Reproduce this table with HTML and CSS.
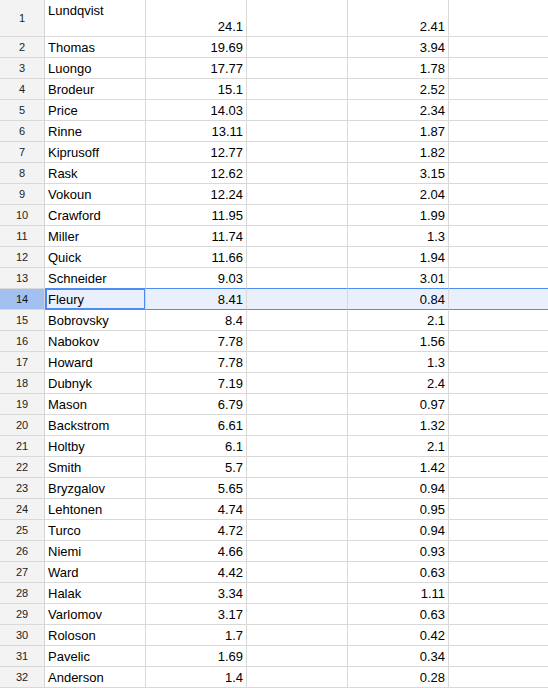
FILE: index.html
```html
<!DOCTYPE html>
<html>
<head>
<meta charset="utf-8">
<link rel="stylesheet" href="styles.css">
</head>
<body>
<table class="sheet">
<colgroup><col class="c-h"><col class="c-a"><col class="c-b"><col class="c-c"><col class="c-d"><col class="c-e"></colgroup>
<tbody>
<tr class="r-tall"><th>1</th><td class="name top">Lundqvist</td><td class="num">24.1</td><td></td><td class="num">2.41</td><td></td></tr>
<tr><th>2</th><td class="name">Thomas</td><td class="num">19.69</td><td></td><td class="num">3.94</td><td></td></tr>
<tr><th>3</th><td class="name">Luongo</td><td class="num">17.77</td><td></td><td class="num">1.78</td><td></td></tr>
<tr><th>4</th><td class="name">Brodeur</td><td class="num">15.1</td><td></td><td class="num">2.52</td><td></td></tr>
<tr><th>5</th><td class="name">Price</td><td class="num">14.03</td><td></td><td class="num">2.34</td><td></td></tr>
<tr><th>6</th><td class="name">Rinne</td><td class="num">13.11</td><td></td><td class="num">1.87</td><td></td></tr>
<tr><th>7</th><td class="name">Kiprusoff</td><td class="num">12.77</td><td></td><td class="num">1.82</td><td></td></tr>
<tr><th>8</th><td class="name">Rask</td><td class="num">12.62</td><td></td><td class="num">3.15</td><td></td></tr>
<tr><th>9</th><td class="name">Vokoun</td><td class="num">12.24</td><td></td><td class="num">2.04</td><td></td></tr>
<tr><th>10</th><td class="name">Crawford</td><td class="num">11.95</td><td></td><td class="num">1.99</td><td></td></tr>
<tr><th>11</th><td class="name">Miller</td><td class="num">11.74</td><td></td><td class="num">1.3</td><td></td></tr>
<tr><th>12</th><td class="name">Quick</td><td class="num">11.66</td><td></td><td class="num">1.94</td><td></td></tr>
<tr class="before-sel"><th>13</th><td class="name">Schneider</td><td class="num">9.03</td><td></td><td class="num">3.01</td><td></td></tr>
<tr class="sel"><th>14</th><td class="name active">Fleury</td><td class="num">8.41</td><td></td><td class="num">0.84</td><td></td></tr>
<tr><th>15</th><td class="name">Bobrovsky</td><td class="num">8.4</td><td></td><td class="num">2.1</td><td></td></tr>
<tr><th>16</th><td class="name">Nabokov</td><td class="num">7.78</td><td></td><td class="num">1.56</td><td></td></tr>
<tr><th>17</th><td class="name">Howard</td><td class="num">7.78</td><td></td><td class="num">1.3</td><td></td></tr>
<tr><th>18</th><td class="name">Dubnyk</td><td class="num">7.19</td><td></td><td class="num">2.4</td><td></td></tr>
<tr><th>19</th><td class="name">Mason</td><td class="num">6.79</td><td></td><td class="num">0.97</td><td></td></tr>
<tr><th>20</th><td class="name">Backstrom</td><td class="num">6.61</td><td></td><td class="num">1.32</td><td></td></tr>
<tr><th>21</th><td class="name">Holtby</td><td class="num">6.1</td><td></td><td class="num">2.1</td><td></td></tr>
<tr><th>22</th><td class="name">Smith</td><td class="num">5.7</td><td></td><td class="num">1.42</td><td></td></tr>
<tr><th>23</th><td class="name">Bryzgalov</td><td class="num">5.65</td><td></td><td class="num">0.94</td><td></td></tr>
<tr><th>24</th><td class="name">Lehtonen</td><td class="num">4.74</td><td></td><td class="num">0.95</td><td></td></tr>
<tr><th>25</th><td class="name">Turco</td><td class="num">4.72</td><td></td><td class="num">0.94</td><td></td></tr>
<tr><th>26</th><td class="name">Niemi</td><td class="num">4.66</td><td></td><td class="num">0.93</td><td></td></tr>
<tr><th>27</th><td class="name">Ward</td><td class="num">4.42</td><td></td><td class="num">0.63</td><td></td></tr>
<tr><th>28</th><td class="name">Halak</td><td class="num">3.34</td><td></td><td class="num">1.11</td><td></td></tr>
<tr><th>29</th><td class="name">Varlomov</td><td class="num">3.17</td><td></td><td class="num">0.63</td><td></td></tr>
<tr><th>30</th><td class="name">Roloson</td><td class="num">1.7</td><td></td><td class="num">0.42</td><td></td></tr>
<tr><th>31</th><td class="name">Pavelic</td><td class="num">1.69</td><td></td><td class="num">0.34</td><td></td></tr>
<tr><th>32</th><td class="name">Anderson</td><td class="num">1.4</td><td></td><td class="num">0.28</td><td></td></tr>
</tbody>
</table>
</body>
</html>
```
FILE: styles.css
```css
html, body {
  margin: 0;
  padding: 0;
  background: #ffffff;
  overflow: hidden;
}
.sheet {
  border-collapse: separate;
  border-spacing: 0;
  table-layout: fixed;
  width: 550px;
  font-family: "Liberation Sans", Arial, sans-serif;
  font-size: 13px;
  color: #000000;
}
.c-h { width: 45px; }
.c-a, .c-b, .c-c, .c-d, .c-e { width: 101px; }
.sheet th, .sheet td {
  height: 19px;
  padding: 0 3px 1px 3px;
  border-right: 1px solid #d9d9d9;
  border-bottom: 1px solid #d9d9d9;
  vertical-align: bottom;
  line-height: 16px;
  white-space: nowrap;
  overflow: hidden;
  box-sizing: content-box;
}
.sheet th {
  background: #f3f3f3;
  font-weight: normal;
  font-size: 11px;
  color: #222222;
  text-align: center;
  vertical-align: middle;
  padding: 0 0 1px 0;
  border-right-color: #d4d4d4;
}
.sheet .r-tall th, .sheet .r-tall td { height: 35px; }
.sheet .r-tall td.top {
  vertical-align: top;
  height: 32px;
  padding-top: 3px;
}
.name { text-align: left; }
.num { text-align: right; }
.sheet .before-sel td { border-bottom-color: #4d8ef0; }
.sheet .sel td {
  background: #e9f0fc;
  border-bottom-color: #4d8ef0;
}
.sheet .sel th {
  background: #a3c1f0;
  color: #111111;
}
.sheet td.active {
  position: relative;
}
.active::after {
  content: "";
  position: absolute;
  left: 0;
  top: -1px;
  right: -1px;
  bottom: -1px;
  border: 2px solid #4a8af4;
}
```
